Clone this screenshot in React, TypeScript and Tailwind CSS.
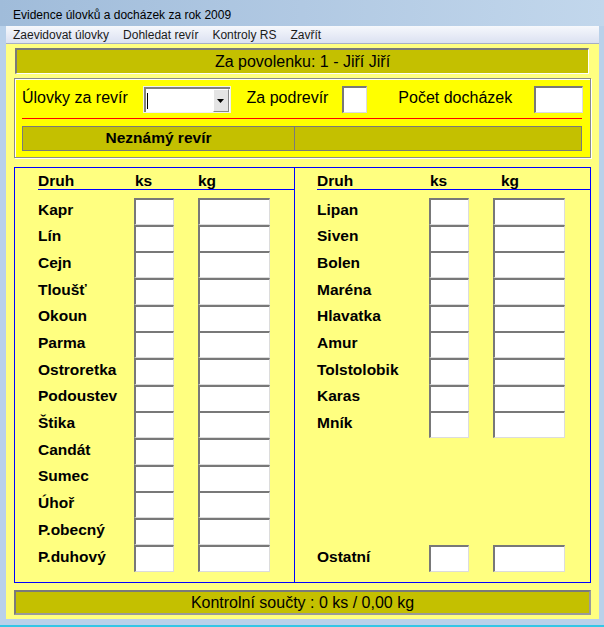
import React from "react";

const leftFish = [
  "Kapr",
  "Lín",
  "Cejn",
  "Tloušť",
  "Okoun",
  "Parma",
  "Ostroretka",
  "Podoustev",
  "Štika",
  "Candát",
  "Sumec",
  "Úhoř",
  "P.obecný",
  "P.duhový",
];

const rightFish = ["Lipan", "Siven", "Bolen", "Maréna", "Hlavatka", "Amur", "Tolstolobik", "Karas", "Mník", "", "", "", "", "Ostatní"];

const font = { fontFamily: '"Liberation Sans", Arial, sans-serif' };

const Box = ({ w }: { w: string }) => (
  <div className={`${w} h-[27px] bg-white border-t-2 border-l-2 border-[#787878] border-r border-b border-r-[#dcdcdc] border-b-[#dcdcdc]`} />
);

const FishColumn = ({ items, labelW, ksW }: { items: string[]; labelW: string; ksW: string }) => (
  <div className="flex flex-col">
    <div className="h-[22px] flex items-end pb-[1px] font-bold text-[15.5px] leading-none border-b border-[#0000ff]">
      <span className={labelW}>Druh</span>
      <span className={`${ksW} pl-[1px]`}>ks</span>
      <span>kg</span>
    </div>
    <div className="flex flex-col pt-[8px]">
      {items.map((name, i) => (
        <div key={i} className="h-[26.7px] flex items-center">
          <span className={`${labelW} font-bold text-[15.5px] leading-none pb-[4px]`}>{name}</span>
          {name && (
            <>
              <Box w="w-[40px]" />
              <div className="w-[24px]" />
              <Box w="w-[72px]" />
            </>
          )}
        </div>
      ))}
    </div>
  </div>
);

const App = () => {
  return (
    <div className="w-[604px] h-[627px] bg-[#b9d1ea] flex flex-col text-black" style={font}>
      <div className="h-[26px] shrink-0 flex items-center pl-[13px] pt-[4px] text-[12px] bg-gradient-to-r from-[#a0bcda] via-[#b1c9e3] to-[#c2d7ec]">
        Evidence úlovků a docházek za rok 2009
      </div>
      <div className="mx-[6px] mr-[5px] flex flex-col">
        <div className="h-[18px] flex items-center gap-[14px] pl-[7px] text-[12px] text-[#1a1a1a] bg-gradient-to-b from-[#f6f8fc] to-[#dbe1f1] border-b border-[#a6aec4]">
          <span>Zaevidovat úlovky</span>
          <span>Dohledat revír</span>
          <span>Kontroly RS</span>
          <span>Zavřít</span>
        </div>
        <div className="h-[575px] bg-[#ffff80] px-[8px] flex flex-col">
          <div className="mt-[4px] ml-[1px] mr-[2px] h-[26px] bg-[#c4c000] border-t-2 border-l-2 border-[#7a7a7a] border-r border-b border-r-white border-b-white flex items-center justify-center text-[16px]">
            Za povolenku: 1 - Jiří Jiří
          </div>
          <div className="mt-[4px] h-[80px] bg-[#ffff00] border border-[#8a8a8a] shadow-[inset_1px_1px_0_#ffffff,1px_1px_0_#ffffff] px-[7px] pt-[7px] flex flex-col">
            <div className="h-[27px] flex items-center text-[16px]">
              <span className="w-[121px] pb-[3px]">Úlovky za revír</span>
              <div className="w-[88px] h-[27px] border border-[#f0f0f0] flex">
                <div className="flex-1 bg-white border-t-2 border-l-2 border-[#808080] flex items-center justify-between pl-[1px] pr-[1px]">
                  <div className="w-[1px] h-[16px] bg-black" />
                  <div className="w-[16px] h-[23px] bg-[#e4e4e4] border border-t-white border-l-white border-r-[#888] border-b-[#888] flex items-center justify-center">
                    <svg width="7" height="4" viewBox="0 0 7 4">
                      <path d="M0 0h7L3.5 4z" fill="#000" />
                    </svg>
                  </div>
                </div>
              </div>
              <span className="ml-[16px] w-[96px] pb-[3px]">Za podrevír</span>
              <Box w="w-[25px]" />
              <span className="ml-[31px] w-[136px] pb-[3px]">Počet docházek</span>
              <Box w="w-[49px]" />
            </div>
            <div className="mt-[5px] mr-[1px] h-[1px] bg-[#ff0000]" />
            <div className="mt-[7px] mr-[1px] h-[25px] bg-[#c4c000] border border-[#7a7a7a] flex">
              <div className="w-[272px] border-r border-[#7a7a7a] flex items-center justify-center font-bold text-[15.5px] pb-[1px]">
                Neznámý revír
              </div>
              <div className="flex-1" />
            </div>
          </div>
          <div className="mt-[9px] h-[416px] border border-[#0000ff] flex">
            <div className="w-[280px] border-r border-[#0000ff] pl-[23px]">
              <FishColumn items={leftFish} labelW="w-[96px]" ksW="w-[64px]" />
            </div>
            <div className="flex-1 pl-[22px]">
              <FishColumn items={rightFish} labelW="w-[112px]" ksW="w-[72px]" />
            </div>
          </div>
          <div className="mt-[7px] h-[25px] bg-[#c4c000] border-2 border-[#7a7a7a] border-r-[#9a9a9a] border-b-[#9a9a9a] flex items-center justify-center text-[16px]">
            Kontrolní součty : 0 ks / 0,00 kg
          </div>
        </div>
      </div>
      <div className="flex-1" />
      <div className="h-[2px] bg-[#34c6e6]" />
    </div>
  );
};

export default App;
